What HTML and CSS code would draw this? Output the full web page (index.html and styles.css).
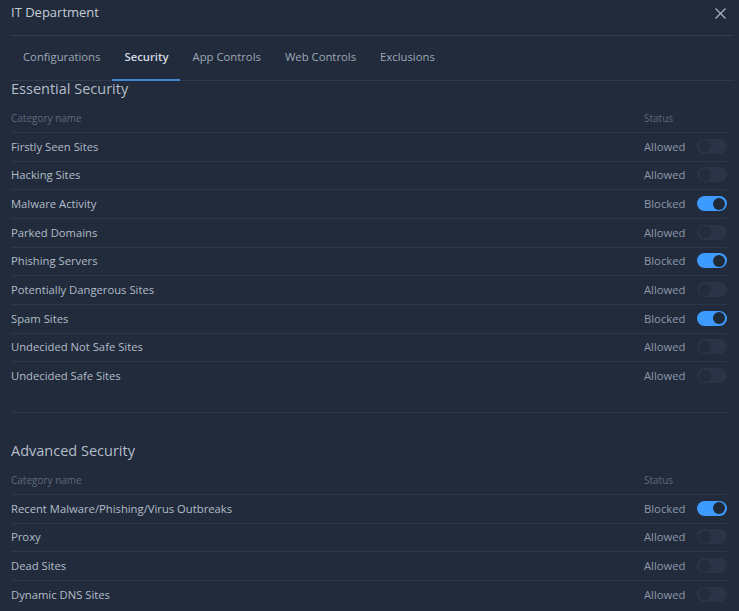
FILE: index.html
```html
<!DOCTYPE html>
<html>
<head>
<meta charset="utf-8">
<link rel="stylesheet" href="styles.css">
</head>
<body>
<div class="modal">
  <div class="header">
    <div class="title">IT Department</div>
    <button class="close" aria-label="Close">
      <svg width="11" height="11" viewBox="0 0 11 11"><path d="M0.5 0.5L10.5 10.5M10.5 0.5L0.5 10.5" stroke="#aab3c0" stroke-width="1.2" fill="none"/></svg>
    </button>
  </div>
  <div class="tabs">
    <div class="tab">Configurations</div>
    <div class="tab active">Security</div>
    <div class="tab">App Controls</div>
    <div class="tab">Web Controls</div>
    <div class="tab">Exclusions</div>
  </div>
  <div class="content">
    <div class="section">
      <div class="section-title">Essential Security</div>
      <div class="thead"><span>Category name</span><span class="status-col">Status</span></div>
      <div class="row"><span class="name">Firstly Seen Sites</span><span class="status">Allowed</span><span class="toggle"></span></div>
      <div class="row"><span class="name">Hacking Sites</span><span class="status">Allowed</span><span class="toggle"></span></div>
      <div class="row"><span class="name">Malware Activity</span><span class="status">Blocked</span><span class="toggle on"></span></div>
      <div class="row"><span class="name">Parked Domains</span><span class="status">Allowed</span><span class="toggle"></span></div>
      <div class="row"><span class="name">Phishing Servers</span><span class="status">Blocked</span><span class="toggle on"></span></div>
      <div class="row"><span class="name">Potentially Dangerous Sites</span><span class="status">Allowed</span><span class="toggle"></span></div>
      <div class="row"><span class="name">Spam Sites</span><span class="status">Blocked</span><span class="toggle on"></span></div>
      <div class="row"><span class="name">Undecided Not Safe Sites</span><span class="status">Allowed</span><span class="toggle"></span></div>
      <div class="row"><span class="name">Undecided Safe Sites</span><span class="status">Allowed</span><span class="toggle"></span></div>
    </div>
    <div class="divider"></div>
    <div class="section">
      <div class="section-title">Advanced Security</div>
      <div class="thead"><span>Category name</span><span class="status-col">Status</span></div>
      <div class="row"><span class="name">Recent Malware/Phishing/Virus Outbreaks</span><span class="status">Blocked</span><span class="toggle on"></span></div>
      <div class="row"><span class="name">Proxy</span><span class="status">Allowed</span><span class="toggle"></span></div>
      <div class="row"><span class="name">Dead Sites</span><span class="status">Allowed</span><span class="toggle"></span></div>
      <div class="row"><span class="name">Dynamic DNS Sites</span><span class="status">Allowed</span><span class="toggle"></span></div>
    </div>
  </div>
</div>
</body>
</html>
```
FILE: styles.css
```css
html, body {
  margin: 0;
  padding: 0;
  background: #212b3b;
  height: 100%;
  overflow: hidden;
}
body {
  font-family: "Open Sans", "Noto Sans", sans-serif;
  color: #b3bcc9;
}
.modal {
  padding: 0 5px 0 11px;
}
.header {
  height: 35px;
  border-bottom: 1px solid #333e4f;
  display: flex;
  justify-content: space-between;
  align-items: flex-start;
}
.title {
  font-size: 13px;
  line-height: 16px;
  margin-top: 4px;
  color: #c3cbd6;
}
.close {
  background: none;
  border: 0;
  padding: 0;
  margin: 8px 8px 0 0;
  width: 11px;
  height: 11px;
  display: flex;
}
.tabs {
  display: flex;
  height: 44px;
  border-bottom: 1px solid #2e3949;
}
.tab {
  padding: 0 12px;
  font-size: 11.3px;
  line-height: 42px;
  height: 44px;
  box-sizing: border-box;
  color: #9ea8b7;
  font-weight: 500;
  position: relative;
}
.tab.active {
  color: #d3d9e2;
  font-weight: 600;
}
.tab.active::after {
  content: "";
  position: absolute;
  left: 0;
  right: 0;
  bottom: -1px;
  height: 2px;
  background: #3f86d6;
}
.content {
  padding-right: 7px;
}
.section-title {
  font-size: 14.5px;
  line-height: 15px;
  color: #b4bdca;
  font-weight: 400;
}
.thead {
  height: 36px;
  display: flex;
  align-items: flex-end;
  font-size: 10px;
  line-height: 14px;
  color: #5e6a7d;
  box-sizing: border-box;
  padding-bottom: 7px;
}
.thead span:first-child {
  flex: 1;
}
.status-col {
  width: 83px;
}
.row {
  height: 28.67px;
  box-sizing: border-box;
  border-top: 1px solid #2c3747;
  padding-bottom: 1px;
  display: flex;
  align-items: center;
  font-size: 11.25px;
}
.name {
  flex: 1;
  color: #b3bcc9;
}
.status {
  width: 53px;
  color: #8d98a9;
}
.toggle {
  width: 30px;
  height: 15px;
  border-radius: 8px;
  background: #2a3446;
  position: relative;
}
.toggle::after {
  content: "";
  position: absolute;
  top: 1.5px;
  left: 2px;
  width: 12px;
  height: 12px;
  border-radius: 50%;
  background: #232c3c;
}
.toggle.on {
  background: #3d9bff;
}
.toggle.on::after {
  left: auto;
  right: 2px;
  background: #1f2938;
}
.divider {
  margin-top: 22px;
  border-top: 1px solid #2c3747;
  margin-bottom: 30px;
}
```
